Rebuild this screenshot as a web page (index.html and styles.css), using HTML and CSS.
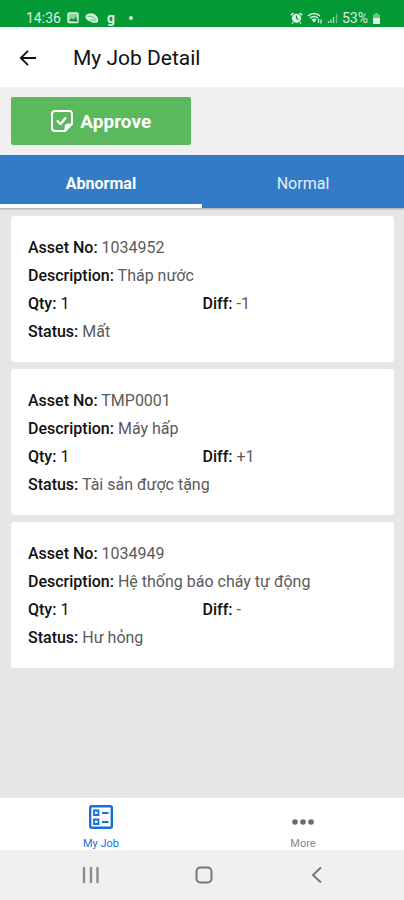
FILE: index.html
```html
<!DOCTYPE html>
<html lang="en">

<head>
  <meta charset="UTF-8">
  <title>My Job Detail</title>
  <meta name="viewport" content="width=device-width, initial-scale=1.0">
  <link rel="stylesheet" href="styles.css">
</head>

<body>

  <div class="status-bar">
    <div class="status-left">
      <span class="clock">14:36</span>
      <svg class="picture" width="12" height="12" viewBox="0 0 12 12">
        <rect x="1" y="1" width="10" height="9.5" rx="1" fill="#8fd3a3" stroke="currentColor" stroke-width="1.4" />
        <path d="M2 9l2.500-3 2 1.800L9 4.500l1.500 5z" fill="#12913a" />
      </svg>
      <svg width="14" height="12" viewBox="0 0 14 12">
        <path d="M.5 4C2 .8 8 .2 11 3.500c2 1.800 2.800 4.500 2 6.500-2.500 1.500-6.500 1-8.500-1C2 8.500 0 6.500.5 4z" fill="currentColor" />
        <path d="M2.500 4.500c3-.8 6 .3 9 3M5 8c2-.5 4 0 6 1" fill="none" stroke="#4aab68" stroke-width=".9" />
      </svg>
      <b class="app-mark">g</b>
      <span class="dot"></span>
    </div>
    <div class="status-right">
      <svg width="13" height="12" viewBox="0 0 13 12">
        <path d="M.8 3.200l2.700-2.200M12.200 3.200L9.500 1M3 10.500L2 11.500M10 10.500l1 1" stroke="currentColor" stroke-width="1.600" />
        <circle cx="6.500" cy="6.300" r="4.600" fill="currentColor" />
        <path d="M6.500 3.500v3l2 1" fill="none" stroke="#12913a" stroke-width="1.200" />
      </svg>
      <svg width="16" height="12" viewBox="0 0 16 12">
        <path d="M1 4c3.600-3.200 8.400-3.200 12 0M3 6.200c2.400-2 5.600-2 8 0" fill="none" stroke="currentColor" stroke-width="1.600" />
        <path d="M4.500 7.500c1.500-1.200 3.500-1.200 5 0L7 10.500z" fill="currentColor" />
        <path d="M11.500 7v4M14 7.500v4" stroke="currentColor" stroke-width="1.300" />
      </svg>
      <svg width="11" height="12" viewBox="0 0 11 12">
        <path d="M1.500 9v2M4 7.500V11M6.500 5v6" stroke="#a5dab4" stroke-width="1.400" />
        <path d="M9.500 2v9" stroke="#6cc487" stroke-width="1.400" />
      </svg>
      <span class="percent">53%</span>
      <svg width="9" height="13" viewBox="0 0 9 13">
        <path d="M3 1h3v1.500h2V6H1V2.500h2z" fill="#6cc487" />
        <path d="M1 6h7v6H1z" fill="currentColor" />
      </svg>
    </div>
  </div>

  <header class="header">
    <button class="back-btn" type="button" aria-label="Back">
      <svg width="18" height="18" viewBox="0 0 18 18" fill="none" stroke="#111" stroke-width="1.800">
        <path d="M17 9H2M9 1.800L1.800 9 9 16.200" />
      </svg>
    </button>
    <h1>My Job Detail</h1>
  </header>

  <div class="toolbar">
    <button class="approve-btn" type="button">
      <svg width="24" height="24" viewBox="0 0 24 24" fill="none" stroke="#fff" stroke-width="2" stroke-linejoin="round">
        <path d="M5 2h14a3 3 0 0 1 3 3v10l-7 7H5a3 3 0 0 1-3-3V5a3 3 0 0 1 3-3z" />
        <path d="M22 15l-7 7v-4a3 3 0 0 1 3-3z" fill="#fff" stroke-width="1" />
        <path d="M7 11.500l3.500 3.500L16 8.500" stroke-width="2.200" />
      </svg>
      Approve
    </button>
  </div>

  <div class="tabs" role="tablist">
    <button class="tab active" type="button" role="tab" aria-selected="true">Abnormal</button>
    <button class="tab" type="button" role="tab" aria-selected="false">Normal</button>
  </div>

  <main class="list">
    <div class="card">
      <p><b>Asset No:</b> 1034952</p>
      <p><b>Description:</b> Tháp nước</p>
      <div class="row">
        <p class="qty"><b>Qty:</b> 1</p>
        <p><b>Diff:</b> -1</p>
      </div>
      <p><b>Status:</b> Mất</p>
    </div>
    <div class="card">
      <p><b>Asset No:</b> TMP0001</p>
      <p><b>Description:</b> Máy hấp</p>
      <div class="row">
        <p class="qty"><b>Qty:</b> 1</p>
        <p><b>Diff:</b> +1</p>
      </div>
      <p><b>Status:</b> Tài sản được tặng</p>
    </div>
    <div class="card">
      <p><b>Asset No:</b> 1034949</p>
      <p><b>Description:</b> Hệ thống báo cháy tự động</p>
      <div class="row">
        <p class="qty"><b>Qty:</b> 1</p>
        <p><b>Diff:</b> -</p>
      </div>
      <p><b>Status:</b> Hư hỏng</p>
    </div>
  </main>

  <nav class="bottom-nav">
    <a class="nav-item active" href="#job">
      <svg width="24" height="24" viewBox="0 0 24 24" fill="none" stroke="currentColor">
        <rect x="1.200" y="1.200" width="21.600" height="21.600" rx="1.500" stroke-width="2.400" />
        <path d="M5 5.500h4.500V10H5zM5 14.500h4.500V19H5z" stroke-width="1.800" />
        <path d="M13 8h6.500M13 17h6.500" stroke-width="2.200" />
      </svg>
      <span>My Job</span>
    </a>
    <a class="nav-item" href="#more">
      <svg width="24" height="24" viewBox="0 0 24 24" fill="#6b6b6b">
        <circle cx="4" cy="17" r="2.800" />
        <circle cx="12" cy="17" r="2.800" />
        <circle cx="20" cy="17" r="2.800" />
      </svg>
      <span>More</span>
    </a>
  </nav>

  <div class="system-nav">
    <button type="button" aria-label="Recent apps">
      <svg width="18" height="18" viewBox="0 0 18 18" stroke="#8c8c8c" stroke-width="2.400">
        <path d="M2 1v16M9 1v16M15.500 1v16" />
      </svg>
    </button>
    <button type="button" aria-label="Home">
      <svg width="18" height="18" viewBox="0 0 18 18" fill="none" stroke="#777" stroke-width="2">
        <rect x="1.500" y="1.500" width="15" height="15" rx="4" />
      </svg>
    </button>
    <button type="button" aria-label="Back">
      <svg width="18" height="18" viewBox="0 0 18 18" fill="none" stroke="#777" stroke-width="2">
        <path d="M13 1.500L5 9l8 7.500" />
      </svg>
    </button>
  </div>

</body>

</html>
```
FILE: styles.css
```css
* {
  box-sizing: border-box;
}

body {
  margin: 0;
  min-height: 100vh;
  display: flex;
  flex-direction: column;
  background: #e6e6e6;
  color: #111;
  font-family: Roboto, "Noto Sans", sans-serif;
}

button {
  border: 0;
  padding: 0;
  background: none;
  font-family: inherit;
  cursor: pointer;
}

svg {
  display: block;
  flex: none;
}

/* 状态栏 */
.status-bar {
  display: flex;
  justify-content: space-between;
  height: 27px;
  padding: 9px 23px 0 26px;
  background: #039a36;
  color: #d9f1df;
  font-size: 14px;
  line-height: 18px;
}

.status-left,
.status-right {
  display: flex;
  align-items: center;
}

.status-left {
  gap: 6px;
}

.status-right {
  gap: 4px;
}

.app-mark {
  width: 12px;
  text-align: center;
}

.dot {
  width: 4px;
  height: 4px;
  margin-left: 6px;
  border-radius: 50%;
  background: #d9f1df;
}

/* 标题栏 */
.header {
  display: flex;
  align-items: center;
  gap: 36px;
  height: 60px;
  padding: 2px 19px 0;
  background: #fff;
}

.header h1 {
  margin: 0;
  font-size: 21px;
  font-weight: 400;
  line-height: 28px;
}

.toolbar {
  padding: 10px 11px;
  background: #f0f0f0;
}

.approve-btn {
  display: flex;
  align-items: center;
  justify-content: center;
  gap: 6px;
  width: 47%;
  height: 48px;
  border-radius: 2px;
  background: #5cb85c;
  color: #fff;
  font-size: 19px;
  font-weight: 700;
}

/* 标签页 */
.tabs {
  display: flex;
  height: 53px;
  background: #337bc7;
  box-shadow: 0 1px 2px rgba(0, 0, 0, 0.3);
}

.tab {
  flex: 1;
  padding-top: 7px;
  border-bottom: 4px solid transparent;
  color: #e3effa;
  font-size: 16px;
}

.tab.active {
  border-bottom-color: #fff;
  color: #fff;
  font-weight: 700;
}

.list {
  flex: 1;
  display: flex;
  flex-direction: column;
  gap: 7px;
  padding: 8px 10px 8px 11px;
}

.card {
  padding: 18px 17px 16px;
  border-radius: 3px;
  background: #fff;
  color: #5a5a5a;
  font-size: 16px;
  font-weight: 400;
  line-height: 28px;
}

.card p {
  margin: 0;
}

.card b {
  color: #111;
  font-weight: 500;
}

.row {
  display: grid;
  grid-template-columns: 1fr 1fr;
}

.card .qty {
  color: #111;
}

/* 底部导航 */
.bottom-nav {
  display: flex;
  height: 52px;
  background: #fff;
}

.nav-item {
  flex: 1;
  display: flex;
  flex-direction: column;
  align-items: center;
  gap: 7px;
  padding-top: 7px;
  color: #888;
  font-size: 11px;
  line-height: 16px;
  text-decoration: none;
}

.nav-item.active {
  color: #1670d8;
}

.system-nav {
  display: flex;
  justify-content: space-between;
  align-items: center;
  height: 50px;
  padding: 0 78px 0 82px;
  background: #f0f0f0;
}
```
